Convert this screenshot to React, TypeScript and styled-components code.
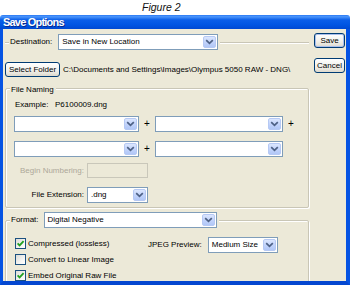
import React from 'react';
import styled, { createGlobalStyle, css } from 'styled-components';

const BEIGE = '#ECE9D8';
const FONT = "'Liberation Sans', Arial, sans-serif";

const GlobalStyle = createGlobalStyle`
  html, body {
    margin: 0;
    padding: 0;
    background: #fff;
  }
  body {
    width: 350px;
    height: 285px;
    overflow: hidden;
    font-family: ${FONT};
    font-size: 8px;
    color: #000;
  }
`;

/**
 * Page + window chrome
 */
const Page = styled.div`
  width: 350px;
  height: 285px;
  display: flex;
  flex-direction: column;
`;

const Caption = styled.div`
  height: 15px;
  box-sizing: border-box;
  padding: 1px 0 0 142px;
  font: italic 10.5px/13px ${FONT};
  color: #111;
`;

const TitleBar = styled.div`
  height: 14px;
  padding-left: 3px;
  border-radius: 3px 3px 0 0;
  background: linear-gradient(
    to bottom,
    #2a78f2 0%,
    #4b95fb 12%,
    #0a5ee9 35%,
    #0055e3 70%,
    #0049d2 100%
  );
  color: #fff;
  font: bold 11px/14px ${FONT};
  letter-spacing: -0.8px;
  text-shadow: 1px 1px 0 #0b2a8c;
`;

const Frame = styled.div`
  display: flex;
  height: 252px;
  overflow: hidden;
  background: ${BEIGE};
  border-left: 3px solid #0553e3;
  border-right: 4px solid #0553e3;
  border-bottom: 4px solid #0447d0;
`;

const Main = styled.div`
  display: flex;
  flex-direction: column;
  width: 304px;
  margin-left: 2px;
  padding-top: 13px;
`;

const SideButtons = styled.div`
  display: flex;
  flex-direction: column;
  gap: 10px;
  margin-left: 5px;
  padding-top: 4px;
`;

/**
 * Group boxes
 */
const Group = styled.div<{ $top: number; $open?: boolean; $pad?: number }>`
  margin-top: ${(p) => p.$top}px;
  padding-bottom: ${(p) => p.$pad ?? 0}px;
  display: flex;
  flex-direction: column;
  ${(p) =>
    p.$open
      ? css`
          border-top: 1px solid #c9c6b6;
          box-shadow: inset 0 1px 0 #fff;
        `
      : css`
          border: 1px solid #c9c6b6;
          border-radius: 2px;
          box-shadow: inset 1px 1px 0 #fff, 1px 1px 0 #fff;
        `}
`;

const GroupHeader = styled.div<{ $offset: number; $h: number }>`
  display: flex;
  margin-top: ${(p) => p.$offset}px;
  height: ${(p) => p.$h}px;
  padding-left: 4px;
`;

const Legend = styled.div<{ $gap?: number }>`
  display: flex;
  align-items: center;
  gap: ${(p) => p.$gap ?? 0}px;
  padding: 0 2px 0 1px;
  background: ${BEIGE};
  line-height: 10px;
`;

/**
 * Rows and text
 */
const Row = styled.div<{ $top: number; $left?: number }>`
  display: flex;
  align-items: center;
  margin-top: ${(p) => p.$top}px;
  padding-left: ${(p) => p.$left ?? 0}px;
`;

const Text = styled.span<{ $disabled?: boolean }>`
  line-height: 10px;
  white-space: nowrap;
  color: ${(p) => (p.$disabled ? '#aca899' : '#000')};
`;

const FieldLabel = styled(Text)`
  width: 70px;
  margin-right: 3px;
  text-align: right;
`;

const Plus = styled.span`
  width: 16px;
  text-align: center;
  font-size: 10px;
  line-height: 10px;
`;

const PathText = styled(Text)`
  margin-left: 3px;
`;

/**
 * Controls
 */
const Button = styled.div<{ $w: number; $default?: boolean }>`
  width: ${(p) => p.$w}px;
  height: 15px;
  box-sizing: border-box;
  display: flex;
  align-items: center;
  justify-content: center;
  border: 1px solid #003c74;
  border-radius: 3px;
  background: linear-gradient(to bottom, #ffffff 0%, #f4f4f0 45%, #e6e3da 85%, #d6d0c5 100%);
  line-height: 10px;
  white-space: nowrap;
  box-shadow: ${(p) =>
    p.$default ? 'inset 0 0 0 1px #a9bfec' : 'inset 0 -1px 0 #e0dccf'};
`;

const Combo = styled.div<{ $w: number }>`
  width: ${(p) => p.$w}px;
  height: 16px;
  box-sizing: border-box;
  display: flex;
  align-items: center;
  justify-content: space-between;
  border: 1px solid #7f9db9;
  background: #fff;
  padding: 1px 1px 1px 3px;
  line-height: 10px;
  white-space: nowrap;
`;

const ArrowBox = styled.div`
  width: 13px;
  height: 12px;
  box-sizing: border-box;
  display: flex;
  align-items: center;
  justify-content: center;
  border: 1px solid #b6c9f4;
  border-radius: 2px;
  background: linear-gradient(to bottom, #dbe6fe 0%, #c3d4fb 50%, #b1c7f7 100%);
`;

const TextBox = styled.div<{ $w: number }>`
  width: ${(p) => p.$w}px;
  height: 15px;
  box-sizing: border-box;
  border: 1px solid #c9c7ba;
  background: ${BEIGE};
`;

const CheckRow = styled.div`
  display: flex;
  align-items: center;
  height: 11px;
  gap: 2px;
`;

const CheckBoxSquare = styled.div`
  width: 11px;
  height: 11px;
  box-sizing: border-box;
  display: flex;
  align-items: center;
  justify-content: center;
  border: 1px solid #1c5180;
  background: linear-gradient(135deg, #dcdcd7 0%, #f4f4f2 60%, #ffffff 100%);
`;

const Options = styled.div`
  display: flex;
  margin-top: 10px;
  padding-left: 9px;
`;

const CheckColumn = styled.div`
  display: flex;
  flex-direction: column;
  gap: 5px;
  width: 132px;
`;

const PreviewRow = styled.div`
  display: flex;
  align-items: center;
  gap: 6px;
  height: 16px;
  margin-top: -1px;
  padding-left: 1px;
`;

const Chevron = () => (
  <svg width="9" height="6" viewBox="0 0 9 6">
    <path d="M1.2 1.2 L4.5 4.4 L7.8 1.2" fill="none" stroke="#4d6185" strokeWidth="1.7" />
  </svg>
);

const ComboBox = ({ w, value = '' }: { w: number; value?: string }) => (
  <Combo $w={w}>
    <Text>{value}</Text>
    <ArrowBox>
      <Chevron />
    </ArrowBox>
  </Combo>
);

const CheckBox = ({ checked, label }: { checked?: boolean; label: string }) => (
  <CheckRow>
    <CheckBoxSquare>
      {checked && (
        <svg width="9" height="9" viewBox="0 0 9 9">
          <path d="M1.6 4.4 L3.6 6.4 L7.6 2.2" fill="none" stroke="#21a121" strokeWidth="1.8" />
        </svg>
      )}
    </CheckBoxSquare>
    <Text>{label}</Text>
  </CheckRow>
);

/**
 * Save Options dialog
 */
const App = () => {
  return (
    <Page>
      <GlobalStyle />
      <Caption>Figure 2</Caption>
      <TitleBar>Save Options</TitleBar>
      <Frame>
        <Main>
          <Group $top={0} $open>
            <GroupHeader $offset={-9} $h={16}>
              <Legend $gap={6}>
                <Text>Destination:</Text>
                <ComboBox w={160} value="Save in New Location" />
              </Legend>
            </GroupHeader>
            <Row $top={12}>
              <Button $w={55}>Select Folder</Button>
              <PathText>C:\Documents and Settings\Images\Olympus 5050 RAW - DNG\</PathText>
            </Row>
          </Group>

          <Group $top={11} $pad={4}>
            <GroupHeader $offset={-4} $h={10}>
              <Legend>
                <Text>File Naming</Text>
              </Legend>
            </GroupHeader>
            <Row $top={5} $left={9}>
              <Text>Example:&nbsp;&nbsp; P6100009.dng</Text>
            </Row>
            <Row $top={6} $left={8}>
              <ComboBox w={125} />
              <Plus>+</Plus>
              <ComboBox w={128} />
              <Plus>+</Plus>
            </Row>
            <Row $top={9} $left={8}>
              <ComboBox w={125} />
              <Plus>+</Plus>
              <ComboBox w={128} />
            </Row>
            <Row $top={6} $left={8}>
              <FieldLabel $disabled>Begin Numbering:</FieldLabel>
              <TextBox $w={61} />
            </Row>
            <Row $top={9} $left={8}>
              <FieldLabel>File Extension:</FieldLabel>
              <ComboBox w={61} value=".dng" />
            </Row>
          </Group>

          <Group $top={12} $pad={20}>
            <GroupHeader $offset={-9} $h={16}>
              <Legend $gap={5}>
                <Text>Format:</Text>
                <ComboBox w={173} value="Digital Negative" />
              </Legend>
            </GroupHeader>
            <Options>
              <CheckColumn>
                <CheckBox checked label="Compressed (lossless)" />
                <CheckBox label="Convert to Linear Image" />
                <CheckBox checked label="Embed Original Raw File" />
              </CheckColumn>
              <PreviewRow>
                <Text>JPEG Preview:</Text>
                <ComboBox w={70} value="Medium Size" />
              </PreviewRow>
            </Options>
          </Group>
        </Main>
        <SideButtons>
          <Button $w={31} $default>
            Save
          </Button>
          <Button $w={31}>Cancel</Button>
        </SideButtons>
      </Frame>
    </Page>
  );
};

export default App;
